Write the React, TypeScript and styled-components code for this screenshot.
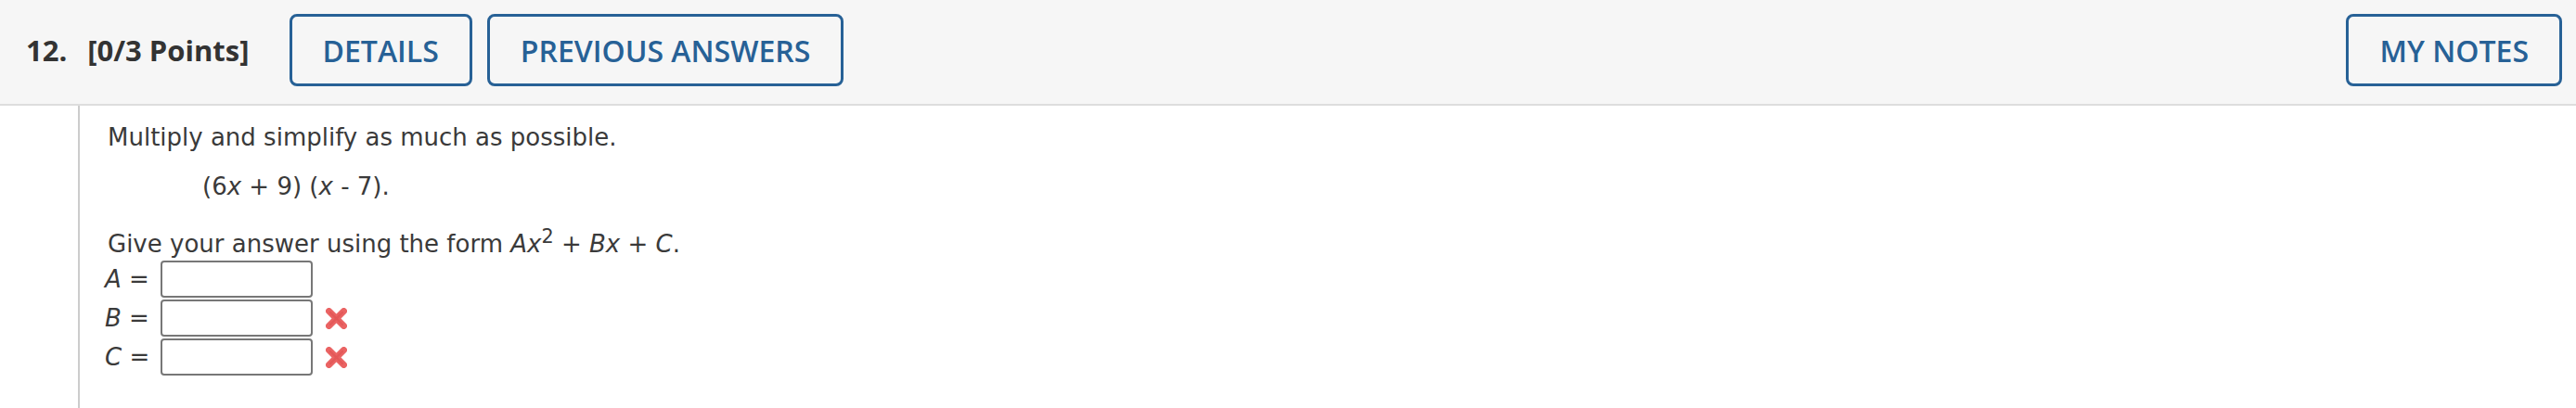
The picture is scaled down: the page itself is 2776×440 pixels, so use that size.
import React from "react";
import styled, { createGlobalStyle } from "styled-components";

const Global = createGlobalStyle`
  html, body { margin: 0; padding: 0; background: #ffffff; }
  #root { min-height: 100vh; }
`;

const Page = styled.div`
  display: flex;
  flex-direction: column;
  min-height: 100vh;
`;

const Header = styled.header`
  box-sizing: border-box;
  height: 114px;
  background: #f6f6f6;
  border-bottom: 2px solid #dddddd;
  display: flex;
  align-items: flex-start;
  padding: 15px 15px 0 28px;
`;

const TitleRow = styled.div`
  height: 78px;
  display: flex;
  align-items: center;
  font-family: "Open Sans", "Liberation Sans", sans-serif;
  font-weight: 700;
  font-size: 31px;
  color: #333333;
  margin-right: 43px;
`;

const Points = styled.span`
  margin-left: 22px;
`;

const ActionButton = styled.button<{ $push?: boolean }>`
  box-sizing: border-box;
  height: 78px;
  padding: 0 33px;
  margin-left: ${(p) => (p.$push ? "auto" : "0")};
  margin-right: 16px;
  background: transparent;
  border: 3px solid #276196;
  border-radius: 8px;
  color: #276196;
  font-family: "Open Sans", "Liberation Sans", sans-serif;
  font-weight: 600;
  font-size: 32px;
  &:last-child { margin-right: 0; }
`;

const Body = styled.div`
  flex: 1;
  display: flex;
`;

const Gutter = styled.div`
  width: 84px;
  border-right: 2px solid #cccccc;
  flex-shrink: 0;
`;

const Content = styled.div`
  padding: 16px 0 0 30px;
  font-family: "DejaVu Sans", Verdana, sans-serif;
  font-size: 26px;
  line-height: 36px;
  color: #3a3a3a;
`;

const Para = styled.div<{ $indent?: number; $mt?: number }>`
  padding-left: ${(p) => p.$indent ?? 0}px;
  margin-top: ${(p) => p.$mt ?? 0}px;
  white-space: nowrap;
`;

const I = styled.i`
  font-style: italic;
`;

const Sup = styled.sup`
  font-size: 0.8em;
  line-height: 0;
  vertical-align: 0.5em;
`;

const Rows = styled.div`
  display: flex;
  flex-direction: column;
  gap: 2px;
`;

const AnswerRow = styled.div`
  display: flex;
  align-items: center;
  height: 40px;
`;

const Label = styled.span`
  white-space: nowrap;
  margin-left: -3px;
  width: 60px;
  flex-shrink: 0;
`;

const Input = styled.input`
  box-sizing: border-box;
  width: 164px;
  height: 40px;
  border: 2px solid #777777;
  border-radius: 4px;
  background: #ffffff;
  margin: 0;
`;

const Mark = styled.svg`
  margin-left: 12px;
  width: 27px;
  height: 27px;
  flex-shrink: 0;
`;

const WrongMark = () => (
  <Mark viewBox="0 0 27 27">
    <defs>
      <filter id="soft" x="-20%" y="-20%" width="140%" height="140%">
        <feGaussianBlur stdDeviation="0.6" />
      </filter>
    </defs>
    <g filter="url(#soft)">
      <g stroke="#ea6464" strokeWidth="7" strokeLinecap="round">
        <line x1="5.5" y1="5.5" x2="21.5" y2="21.5" />
        <line x1="21.5" y1="5.5" x2="5.5" y2="21.5" />
      </g>
      <g stroke="#dc4a4a" strokeWidth="2.5" strokeLinecap="round" opacity="0.45">
        <line x1="7" y1="7" x2="20" y2="20" />
        <line x1="20" y1="7" x2="7" y2="20" />
      </g>
    </g>
  </Mark>
);

const rows = [
  { key: "A", wrong: false },
  { key: "B", wrong: true },
  { key: "C", wrong: true },
];

export default function App() {
  return (
    <Page>
      <Global />
      <Header>
        <TitleRow>
          <span>12.</span>
          <Points>[0/3 Points]</Points>
        </TitleRow>
        <ActionButton>DETAILS</ActionButton>
        <ActionButton>PREVIOUS ANSWERS</ActionButton>
        <ActionButton $push>MY NOTES</ActionButton>
      </Header>
      <Body>
        <Gutter />
        <Content>
          <Para>Multiply and simplify as much as possible.</Para>
          <Para $indent={102} $mt={17}>
            (6<I>x</I> + 9) (<I>x</I> - 7).
          </Para>
          <Para $mt={26}>
            Give your answer using the form <I>Ax</I>
            <Sup>2</Sup> + <I>Bx</I> + <I>C</I>.
          </Para>
          <Rows>
            {rows.map((r) => (
              <AnswerRow key={r.key}>
                <Label>
                  <I>{r.key}</I> =
                </Label>
                <Input type="text" aria-label={r.key} />
                {r.wrong && <WrongMark />}
              </AnswerRow>
            ))}
          </Rows>
        </Content>
      </Body>
    </Page>
  );
}
